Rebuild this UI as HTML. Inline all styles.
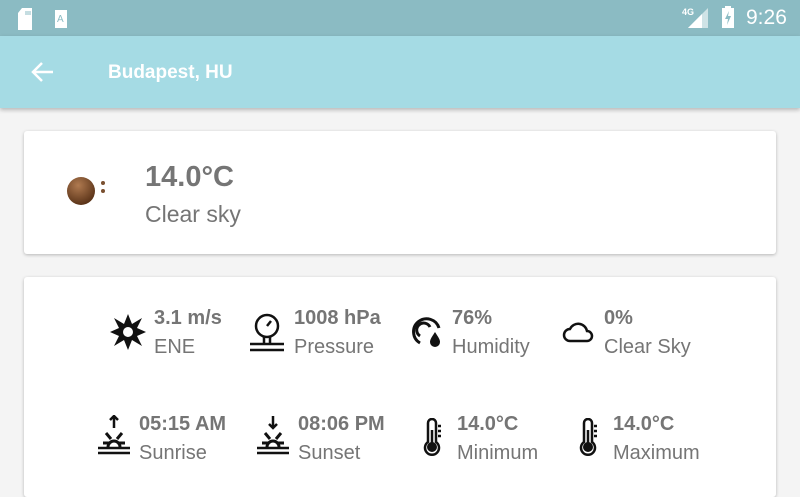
<!DOCTYPE html>
<html><head><style>
*{margin:0;padding:0;box-sizing:border-box}
body{width:800px;height:480px;overflow:hidden;background:#f4f4f4;font-family:"Liberation Sans",sans-serif;position:relative}
.sb{position:absolute;left:0;top:0;width:800px;height:36px;background:#8bbbc3}
.ab{position:absolute;left:0;top:36px;width:800px;height:72px;background:#a5dbe4;box-shadow:0 2px 4px rgba(0,0,0,.25)}
.card{position:absolute;left:24px;width:752px;background:#fff;border-radius:3px;box-shadow:0 1px 3px rgba(0,0,0,.25)}
.t{position:absolute;color:#757575;white-space:nowrap}
.v{font-weight:bold;font-size:20px}
.l{font-size:20px}
svg{position:absolute}
</style></head><body>
<div class="sb">
 <svg style="left:18px;top:8px" width="18" height="22"><path d="M4 0h10v22H0V5z" fill="#fff"/><path d="M8 3v4M10 3v4M12 3v4" stroke="#8bbbc3"/></svg>
 <svg style="left:55px;top:10px" width="12" height="18"><rect width="12" height="18" fill="#fff"/><text x="2" y="12" font-size="10" font-family="Liberation Sans" fill="#8bbbc3">A</text></svg>
 <div class="t" style="left:682px;top:7px;color:#fff;font-size:9px;font-weight:bold">4G</div>
 <svg style="left:688px;top:8px" width="20" height="20"><path d="M20 0V20H0z" fill="#cfe3e6"/><path d="M14 6V20H0z" fill="#fff"/></svg>
 <svg style="left:722px;top:6px" width="12" height="22"><rect x="0" y="2" width="12" height="20" fill="#fff"/><rect x="3" y="0" width="6" height="3" fill="#fff"/><path d="M7 5L3 13h3l-1 6 4-9H6z" fill="#8bbbc3"/></svg>
 <div class="t" style="left:746px;top:6px;color:#fff;font-size:21px">9:26</div>
</div>
<div class="ab">
 <svg style="left:29px;top:23px" width="26" height="26"><path d="M24 13H4M13 4l-9 9 9 9" stroke="#fff" stroke-width="2.5" fill="none"/></svg>
 <div class="t" style="left:108px;top:26px;color:#fff;font-size:19px;font-weight:bold">Budapest, HU</div>
</div>
<div class="card" style="top:131px;height:123px">
 <svg style="left:42px;top:42px" width="44" height="34"><defs><radialGradient id="g" cx=".4" cy=".3" r=".7"><stop offset="0" stop-color="#b07a50"/><stop offset="1" stop-color="#5a3318"/></radialGradient></defs><circle cx="15" cy="18" r="14" fill="url(#g)"/><circle cx="37" cy="10" r="2" fill="#7a5030"/><circle cx="37" cy="18" r="2" fill="#7a5030"/></svg>
 <div class="t" style="left:121px;top:30px;font-size:29px;font-weight:bold">14.0°C</div>
 <div class="t" style="left:121px;top:70px;font-size:23px">Clear sky</div>
</div>
<div class="card" style="top:277px;height:220px"></div>
<svg style="left:110px;top:314px" width="36" height="36"><path d="M18 0l4 10 10-6-5 10 9 4-9 4 5 10-10-6-4 10-4-10-10 6 5-10-9-4 9-4-5-10 10 6z" fill="#111"/><circle cx="18" cy="18" r="5" fill="#fff"/></svg>
<div class="t v" style="left:154px;top:307px">3.1 m/s</div><div class="t l" style="left:154px;top:336px">ENE</div>
<svg style="left:249px;top:312px" width="36" height="40"><circle cx="18" cy="14" r="11" stroke="#111" stroke-width="2.5" fill="none"/><path d="M18 14l4-5" stroke="#111" stroke-width="2.5"/><path d="M15 25v7M21 25v7M1 32h34M1 38h34" stroke="#111" stroke-width="2.5" fill="none"/></svg>
<div class="t v" style="left:294px;top:307px">1008 hPa</div><div class="t l" style="left:294px;top:336px">Pressure</div>
<svg style="left:410px;top:314px" width="34" height="34"><path d="M10 29A13 13 0 1 1 29 14" stroke="#111" stroke-width="3" fill="none"/><path d="M10 22A7 7 0 1 1 20 13" stroke="#111" stroke-width="3" fill="none"/><path d="M25 18c-4 6-5 8-5 10a5 5 0 0 0 10 0c0-2-1-4-5-10z" fill="#111"/></svg>
<div class="t v" style="left:452px;top:307px">76%</div><div class="t l" style="left:452px;top:336px">Humidity</div>
<svg style="left:562px;top:318px" width="32" height="26"><path d="M8 23a6 6 0 0 1 0-12 9 9 0 0 1 17 2 5 5 0 0 1 0 10z" stroke="#111" stroke-width="2.5" fill="none"/></svg>
<div class="t v" style="left:604px;top:307px">0%</div><div class="t l" style="left:604px;top:336px">Clear Sky</div>
<svg style="left:97px;top:415px" width="34" height="40"><path d="M17 1v12M13 5l4-4 4 4" stroke="#111" stroke-width="2.5" fill="none"/><path d="M9 18l5 6M25 18l-5 6M6 28h6M22 28h6M11 32a6 6 0 0 1 12 0" stroke="#111" stroke-width="3" fill="none"/><path d="M1 33h32M1 38h32" stroke="#111" stroke-width="2.5"/></svg>
<div class="t v" style="left:139px;top:413px">05:15 AM</div><div class="t l" style="left:139px;top:442px">Sunrise</div>
<svg style="left:256px;top:415px" width="34" height="40"><path d="M17 1v12M13 9l4 4 4-4" stroke="#111" stroke-width="2.5" fill="none"/><path d="M9 18l5 6M25 18l-5 6M6 28h6M22 28h6M11 32a6 6 0 0 1 12 0" stroke="#111" stroke-width="3" fill="none"/><path d="M1 33h32M1 38h32" stroke="#111" stroke-width="2.5"/></svg>
<div class="t v" style="left:298px;top:413px">08:06 PM</div><div class="t l" style="left:298px;top:442px">Sunset</div>
<svg style="left:420px;top:418px" width="24" height="38"><path d="M8 24V5a4 4 0 0 1 8 0v19a7 7 0 1 1-8 0z" stroke="#111" stroke-width="2.5" fill="none"/><circle cx="12" cy="29" r="5" fill="#111"/><path d="M12 12v16M18 8h3M18 13h3M18 18h3" stroke="#111" stroke-width="2.5"/></svg>
<div class="t v" style="left:457px;top:413px">14.0°C</div><div class="t l" style="left:457px;top:442px">Minimum</div>
<svg style="left:576px;top:418px" width="24" height="38"><path d="M8 24V5a4 4 0 0 1 8 0v19a7 7 0 1 1-8 0z" stroke="#111" stroke-width="2.5" fill="none"/><circle cx="12" cy="29" r="5" fill="#111"/><path d="M12 12v16M18 8h3M18 13h3M18 18h3" stroke="#111" stroke-width="2.5"/></svg>
<div class="t v" style="left:613px;top:413px">14.0°C</div><div class="t l" style="left:613px;top:442px">Maximum</div>
</body></html>
